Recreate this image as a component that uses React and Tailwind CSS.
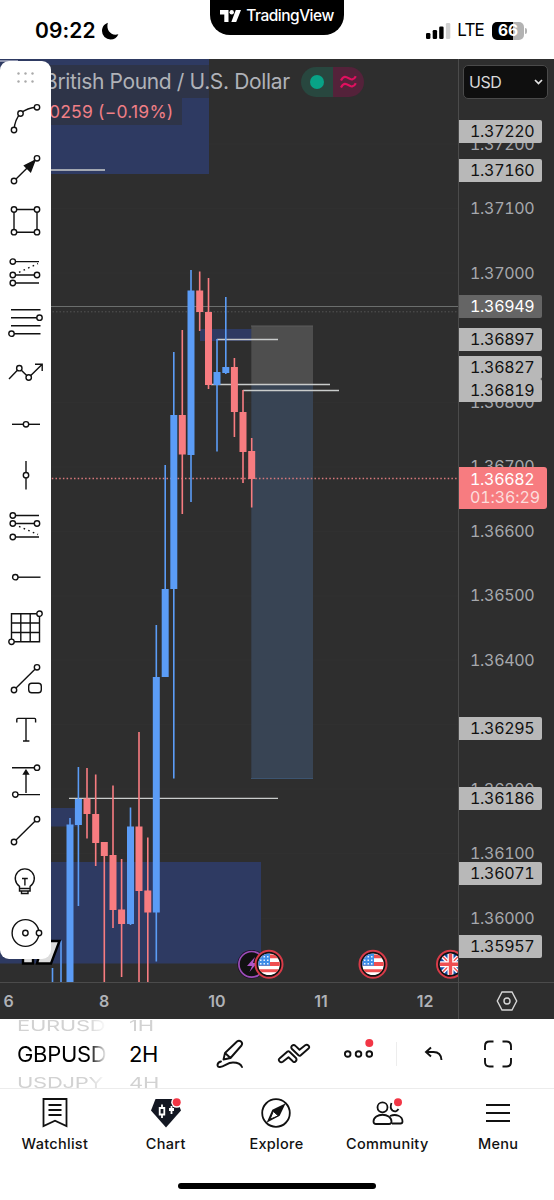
import React from "react";

const BLUE = "#5b9cf6";
const RED = "#f77c80";

// [x, wickTop, bodyTop, bodyBottom, wickBottom, color]
const candles = [
  [52.5, 968, 982, 982, 982, BLUE],
  [61, 940.5, 982, 982, 982, BLUE],
  [70, 818, 824.5, 982, 982, BLUE],
  [78.4, 767, 799, 825, 906, BLUE],
  [87, 768, 798.5, 814, 838.5, RED],
  [95.7, 774.5, 814, 843, 866, RED],
  [104.3, 842, 842, 856, 982, RED],
  [113, 785.5, 855, 910, 928, RED],
  [121.6, 859, 909.5, 924, 977, RED],
  [130.5, 807.5, 826.5, 924, 925, BLUE],
  [139, 732, 826.5, 891, 982, RED],
  [147.8, 837.5, 890.5, 912.5, 982, RED],
  [156.3, 625, 677, 912.5, 961.5, BLUE],
  [165.2, 465, 589, 677, 677, BLUE],
  [173.8, 352, 415, 589, 778.5, BLUE],
  [182.3, 330, 415, 454.5, 514, RED],
  [191, 270, 290.5, 455, 502, BLUE],
  [199.7, 271.5, 290.5, 312, 331, RED],
  [208.5, 278, 312, 385, 389, RED],
  [217, 339, 372, 385, 451.5, BLUE],
  [225.8, 297, 367, 373, 374, BLUE],
  [234.4, 358, 367, 412, 437, RED],
  [243, 390, 412, 452, 483, RED],
  [251.7, 438, 451, 479, 507.5, RED],
];

const ticks = [
  ["1.37200", 143.5],
  ["1.37100", 208],
  ["1.37000", 272.5],
  ["1.36800", 401.5],
  ["1.36700", 466],
  ["1.36600", 530.5],
  ["1.36500", 595],
  ["1.36400", 659.5],
  ["1.36200", 788.5],
  ["1.36100", 853],
  ["1.36000", 917.5],
];

const levels = [
  ["1.37220", 131],
  ["1.37160", 170],
  ["1.36897", 339.5],
  ["1.36827", 367.5],
  ["1.36819", 390.5],
  ["1.36295", 728.5],
  ["1.36186", 798.5],
  ["1.36071", 873],
  ["1.35957", 946],
];

function Dot({ x, y }) {
  return <circle cx={x} cy={y} r="2.7" fill="#fff" />;
}

const tools = [
  <><path d="M7 29C7.6 22 9.5 16.5 13.5 12.5C18 8.6 23 6.6 30 6.3" /><Dot x={7} y={29} /><Dot x={13.5} y={12.5} /><Dot x={30} y={6.3} /></>,
  <><path d="M7 29L30 6.3" /><path d="M28 8.3L17.5 13.6L23.6 19.8Z" fill="#111" /><Dot x={7} y={29} /><Dot x={30} y={6.3} /></>,
  <><path d="M7 6.5H30V29.2H7Z" /><Dot x={7} y={6.5} /><Dot x={30} y={6.5} /><Dot x={7} y={29.2} /><Dot x={30} y={29.2} /></>,
  <><path d="M6 7.6H32M6 21H30M6 29H32" /><path d="M12 18.3L31 9.6" strokeDasharray="1.6 3.4" /><Dot x={5.8} y={7.6} /><Dot x={5.8} y={21} /><Dot x={30} y={21} /><Dot x={5.8} y={29} /></>,
  <><path d="M4 4.7H33.5M4 12.7H32M4 20.7H33.5M5 28.7H33.5" /><Dot x={32.5} y={12.7} /><Dot x={4.5} y={28.7} /></>,
  <><path d="M2 24L12.3 13.2L21.7 22.5L35 9.5M28 9.2H35.2V16" /><Dot x={12.3} y={13.2} /><Dot x={21.7} y={22.5} /></>,
  <><path d="M5 18.3H33" /><Dot x={19} y={18.3} /></>,
  <><path d="M19 4V32.4" /><Dot x={19} y={18.2} /></>,
  <><path d="M6 7.5H32M6 15.5H30M6 29H32" /><path d="M12 18.4L31 26.5" strokeDasharray="1.6 3.4" /><Dot x={5.8} y={7.5} /><Dot x={5.8} y={15.5} /><Dot x={30} y={15.5} /><Dot x={5.8} y={29} /></>,
  <><path d="M8 18.2H33.5" /><Dot x={8.3} y={18.2} /></>,
  <><path d="M4.5 3.7H32.5V31.8H4.5ZM13.8 3.7V31.8M23.2 3.7V31.8M4.5 13H32.5M4.5 22.5H32.5" /><Dot x={32.5} y={3.7} /><Dot x={4.5} y={31.8} /></>,
  <><path d="M7 29L30 6.3" /><rect x="21.7" y="22.3" width="12.6" height="9.4" rx="3" /><Dot x={7} y={29} /><Dot x={30} y={6.3} /></>,
  <path d="M9.8 10.4V7.4Q9.8 6.4 10.8 6.4H27.6Q28.6 6.4 28.6 7.4V10.4M19 6.4V29M16 29H22.4" />,
  <><path d="M5 4.7H30M8 31.6H33M19 30V8" /><path d="M19 7.2L16.6 11H21.4Z" fill="#111" /><Dot x={30} y={4.7} /><Dot x={8.3} y={31.6} /></>,
  <><path d="M7 29L30 6.2" /><Dot x={7} y={29} /><Dot x={30} y={6.2} /></>,
  <><path d="M12.5 22.3A9.5 9.5 0 1 1 23.1 22.3V27H12.5ZM14.5 27V29.5H21V27M12.5 24.5H23M15 14.5H20.8M17.9 14.5V21.5" /></>,
  <><circle cx="18.5" cy="18" r="13.4" /><Dot x={18.4} y={18} /><Dot x={32} y={18} /></>,
];

function UsFlag({ x }) {
  return (
    <g transform={`translate(${x} 964.3)`}>
      <circle r="13.5" fill="#111" stroke="#d83b48" strokeWidth="2" />
      <g clipPath="url(#flag)">
        <path d="M-11-11H11V11H-11Z" fill="#fff" />
        <path d="M-11-9.8H11V-6H-11ZM-11-2.3H11V1.6H-11ZM-11 5H11V8H-11Z" fill="#ef4f51" />
        <path d="M-11-11H1V1.5H-11Z" fill="#3f8fe8" />
        <path d="M-9-7.5H0M-9-4H0M-9-.6H0" stroke="#e8f3ff" strokeWidth="1.5" strokeDasharray="1.5 2" />
      </g>
    </g>
  );
}

function UkFlag({ x }) {
  return (
    <g transform={`translate(${x} 964.3)`}>
      <circle r="13.5" fill="#111" stroke="#d83b48" strokeWidth="2" />
      <g clipPath="url(#flag)">
        <path d="M-11-11H11V11H-11Z" fill="#184fa8" />
        <path d="M-11-11L11 11M11-11L-11 11" stroke="#fff" strokeWidth="4" />
        <path d="M-11-11L11 11M11-11L-11 11" stroke="#ef4f51" strokeWidth="1.5" />
        <path d="M0-11V11M-11 0H11" stroke="#fff" strokeWidth="6" />
        <path d="M0-11V11M-11 0H11" stroke="#ef4f51" strokeWidth="3.4" />
      </g>
    </g>
  );
}

function StatusBar() {
  return (
    <header className="relative flex h-[59px] shrink-0 justify-between bg-white pl-[35px] pr-[27px] text-black">
      <div className="flex h-[62px] items-center gap-[6px]">
        <span className="text-[21px] font-semibold tracking-[0.1px]">09:22</span>
        <svg width="17" height="18" viewBox="0 0 17 18">
          <path d="M5.8 .8C1.8 2.3 0 5.5 0 9A8.5 8.5 0 0 0 8.5 17.5C12.2 17.5 15 15.5 16.4 12.2C9.5 14.5 3.8 8.5 5.8 .8Z" />
        </svg>
      </div>
      <div className="absolute left-[210px] top-0 flex h-[35px] w-[134px] justify-center gap-[5px] rounded-b-[20px] bg-black pt-[5px] text-white">
        <svg width="21" height="12" viewBox="0 0 21 12" className="mt-[5px]" fill="#fff">
          <path d="M0 0H8.5V12H4.3V4.4H0Z" />
          <circle cx="11.7" cy="2.2" r="2.2" />
          <path d="M15.8 0H21L16.2 12H11.3Z" />
        </svg>
        <span className="text-[15.5px] font-medium leading-[22px] tracking-[-0.5px]">TradingView</span>
      </div>
      <div className="flex h-[62px] items-center">
        <svg width="25" height="16" viewBox="0 0 25 16">
          <rect x="0" y="10" width="4.4" height="6" rx="1.3" />
          <rect x="6.7" y="7" width="4.4" height="9" rx="1.3" />
          <rect x="13.2" y="3.5" width="4.4" height="12.5" rx="1.3" />
          <rect x="19.9" y="0" width="4.4" height="16" rx="1.3" fill="#d0d0d0" />
        </svg>
        <span className="ml-[6px] text-[17px] tracking-[-0.8px]">LTE</span>
        <div className="ml-[8px] flex h-[18px] w-[32px] items-center justify-center rounded-[5px] bg-[linear-gradient(90deg,#000_66%,#b3b3b3_66%)] text-[15.5px] font-bold leading-none text-white">66</div>
        <div className="ml-[1px] h-[6px] w-[2px] rounded-r bg-[#b3b3b3]" />
      </div>
    </header>
  );
}

function Plot() {
  return (
    <svg className="block h-[923px] w-[458px]" viewBox="0 59 458 923">
      <defs>
        <clipPath id="flag"><circle r="10.8" /></clipPath>
      </defs>
      <path d="M0 144H458M0 208.5H458M0 273H458M0 402.5H458M0 467H458M0 531.5H458M0 596H458M0 660H458M0 724.5H458M0 789H458M0 853.5H458M0 918.5H458" stroke="#303030" />
      <g fill="#2e3a62">
        <rect x="0" y="59" width="209" height="115" />
        <rect x="200" y="329" width="61" height="12" />
        <rect x="0" y="808" width="78" height="18.5" />
        <rect x="0" y="862" width="261" height="101.5" />
      </g>
      <path d="M0 61H18" stroke="#8d93ad" strokeWidth="2" />
      <rect x="251.3" y="326" width="61.7" height="59" fill="#4e4e4e" />
      <rect x="251.3" y="385" width="61.7" height="394" fill="#384454" />
      <path d="M251 326H313" stroke="#5c5c5c" />
      <path d="M251 778.5H313" stroke="#3c5470" />
      <path d="M0 306.5H458" stroke="#6b6e6d" strokeWidth="1.2" />
      <path d="M0 311.8H458" stroke="#555" strokeDasharray="1.5 2" />
      <path d="M0 478.5H458" stroke="#d9797c" strokeWidth="1.3" strokeDasharray="1.5 2.2" />
      <path d="M0 170H105M217 339.5H278M211 384.5H330M243 390.5H339M69 798.4H278" stroke="#c9cccb" strokeWidth="1.4" />
      {candles.map(([x, top, open, close, bottom, color]) => (
        <g key={x} fill={color}>
          <rect x={x - 0.8} y={top} width="1.6" height={bottom - top} />
          <rect x={x - 3.5} y={open} width="7" height={close - open} />
        </g>
      ))}
      <path d="M12 941H33V963.5H23V950H12ZM43 941H59.5L51 963.5H37Z" fill="#dcdcdc" stroke="#000" strokeWidth="2.4" />
      <circle cx="251.7" cy="964.3" r="14.3" fill="#1c0f22" />
      <circle cx="251.7" cy="964.3" r="12.8" fill="#111" stroke="#9c4db8" strokeWidth="1.7" />
      <path d="M255 957L247 966H252L249.5 972L257 963H253Z" fill="#ad56c8" />
      <UsFlag x={269} />
      <UsFlag x={373} />
      <UkFlag x={450.5} />
    </svg>
  );
}

function Legend() {
  return (
    <div className="absolute left-[44px] top-[6px] flex flex-col items-start whitespace-nowrap">
      <div className="flex h-[33px] items-center gap-[11px] bg-[#2e2e2e]/50">
        <span className="w-[246px] pt-px text-[21px] tracking-[-0.36px] text-[#b0b2b8]">British Pound / U.S. Dollar</span>
        <span className="flex h-[30px] w-[63px] overflow-hidden rounded-full">
          <span className="flex w-1/2 items-center justify-center bg-[#28473f]">
            <span className="size-[14px] rounded-full bg-[#08a387]" />
          </span>
          <span className="flex w-1/2 items-center justify-center bg-[#54223a]">
            <svg width="17" height="14" viewBox="0 0 17 14" fill="none" stroke="#e0105f" strokeWidth="2.2">
              <path d="M1 5.5C3.5.5 6 1.5 8.5 3.2S13.5 5.5 15.8 1.2M1 12.5C3.5 7.5 6 8.5 8.5 10.2S13.5 12.5 15.8 8.2" />
            </svg>
          </span>
        </span>
      </div>
      <div className="flex h-[27px] w-[138px] items-center bg-[#2e2e2e]/50 pl-[5px] pt-[2px] text-[17.5px] tracking-[0.2px] text-[#f07f86]">0259 (−0.19%)</div>
    </div>
  );
}

function ToolRail() {
  return (
    <div className="absolute left-0 top-[2px] flex h-[898px] w-[51px] flex-col rounded-[9px] bg-white">
      <div className="flex h-[32.5px] shrink-0 justify-center pt-[11px]">
        <svg width="17" height="11" viewBox="0 0 17 11" fill="#aaa">
          <circle cx="1.5" cy="1.5" r="1.2" /><circle cx="8.5" cy="1.5" r="1.2" /><circle cx="15.5" cy="1.5" r="1.2" />
          <circle cx="1.5" cy="9.5" r="1.2" /><circle cx="8.5" cy="9.5" r="1.2" /><circle cx="15.5" cy="9.5" r="1.2" />
        </svg>
      </div>
      {tools.map((icon, i) => (
        <button key={i} className="flex h-[50.9px] shrink-0 items-center pl-[7px]">
          <svg width="36" height="36" viewBox="0 0 36 36" fill="none" stroke="#111" strokeWidth="1.4">{icon}</svg>
        </button>
      ))}
    </div>
  );
}

function PriceScale() {
  return (
    <div className="relative h-[923px] w-[96px] overflow-hidden border-l border-[#4b4b4b] text-[16px] tabular-nums tracking-[-0.3px]">
      <button className="ml-[4px] mt-[6px] flex h-[34px] w-[85px] items-center justify-between rounded-[5px] border border-[#4a4a4a] bg-[#0f0f0f] pl-[5px] pr-[4px] tracking-[-0.5px] text-[#d9d9d9]">
        USD
        <svg width="9" height="6" viewBox="0 0 9 6" fill="none" stroke="#e5e5e5" strokeWidth="1.7"><path d="M1 1L4.5 4.5L8 1" /></svg>
      </button>
      {ticks.map(([label, y]) => (
        <span key={label} className="absolute left-[11px] leading-[22px] text-[#a6a8ad]" style={{ top: y - 70 }}>{label}</span>
      ))}
      {levels.map(([label, y]) => (
        <span key={label} className="absolute left-0 h-[23px] w-[83px] rounded-r-[2px] bg-[#b8b8b8] pl-[11px] leading-[23px] text-[#111]" style={{ top: y - 70.5 }}>{label}</span>
      ))}
      <span className="absolute left-0 top-[236px] h-[23px] w-[83px] rounded-r-[2px] bg-[#656565] pl-[11px] leading-[23px] text-white">1.36949</span>
      <div className="absolute left-0 top-[408px] flex h-[42px] w-[88px] flex-col rounded-r-[3px] bg-[#f77c80] pl-[11px] pt-[3px] leading-[18px] text-white">
        <span>1.36682</span>
        <span className="tracking-[-0.1px] text-[#fcdcdc]">01:36:29</span>
      </div>
    </div>
  );
}

function TimeScale() {
  return (
    <div className="flex h-[37px] border-t border-[#4b4b4b] text-[16px] font-semibold text-[#b0b2b7]">
      <div className="flex w-[458px] items-center">
        <span className="w-[17px] text-center">6</span>
        <span className="ml-[57px] w-[60px] text-center">8</span>
        <span className="ml-[53px] w-[60px] text-center">10</span>
        <span className="ml-[44px] w-[60px] text-center">11</span>
        <span className="ml-[44px] w-[60px] text-center">12</span>
      </div>
      <div className="flex w-[96px] items-center justify-center border-l border-[#4b4b4b]">
        <svg width="22" height="20" viewBox="0 0 22 20" fill="none" stroke="#d6d6d6" strokeWidth="1.4">
          <path d="M6 1H16L20.7 10L16 19H6L1.3 10Z" /><circle cx="11" cy="10" r="3" />
        </svg>
      </div>
    </div>
  );
}

function QuickBar() {
  return (
    <div className="flex h-[70px] items-center border-b border-[#ececec] bg-white text-[22px] text-black">
      <div className="ml-[17px] h-[69px] w-[90px] overflow-hidden whitespace-nowrap tracking-[-0.3px] [mask-image:linear-gradient(90deg,#000_80%,transparent)]">
        <div className="h-[21px] origin-top scale-y-65 leading-[20px] text-[#d2d2d2]">EURUSD</div>
        <div className="h-[29px] leading-[29px]">GBPUSD</div>
        <div className="h-[24px] origin-top scale-y-65 pt-[8px] leading-[27px] text-[#d2d2d2]">USDJPY</div>
      </div>
      <div className="ml-[22px] h-[69px] w-[36px] overflow-hidden tracking-[-0.3px]">
        <div className="h-[21px] origin-top scale-y-65 leading-[20px] text-[#d2d2d2]">1H</div>
        <div className="h-[29px] leading-[29px]">2H</div>
        <div className="h-[24px] origin-top scale-y-65 pt-[8px] leading-[27px] text-[#d2d2d2]">4H</div>
      </div>
      <svg className="ml-[50px]" width="32" height="32" viewBox="0 0 32 32" fill="none" stroke="#111" strokeWidth="1.9" strokeLinejoin="round" strokeLinecap="round">
        <path d="M10 15L22 3.5Q24 1.8 26 3.5T26.5 7.5L15.5 20L8.5 21.5ZM10 15L15.5 20" />
        <path d="M6 23.5C1.5 24.5 1.5 29.5 5 29C10 28.5 12 24.5 18 24.5C23 24.5 26 26.5 27 29" />
      </svg>
      <svg className="ml-[30px]" width="34" height="22" viewBox="0 0 34 22" fill="none" stroke="#111" strokeWidth="1.9" strokeLinejoin="round">
        <path d="M2.5 15.5L10.5 8.5Q11.5 7.8 12.5 8.7L19 15Q20.3 17 18.5 18.5T15.5 18L11.5 14.3L5.8 18.8Q4 20 2.5 18.3T2.5 15.5Z" />
        <path d="M15 2.7Q16.8 1.2 18.5 2.9L22.5 6.7L28.2 2.2Q30 1 31.5 2.7T31.5 5.5L23.5 12.5Q22.5 13.2 21.5 12.3L15 6Q13.5 4.3 15 2.7Z" />
      </svg>
      <svg className="ml-[32px]" width="32" height="34" viewBox="0 0 32 34" fill="none" stroke="#111" strokeWidth="1.9">
        <circle cx="4.7" cy="17" r="2.8" /><circle cx="15.5" cy="17" r="2.8" /><circle cx="26.3" cy="17" r="2.8" />
        <circle cx="26.3" cy="6" r="4" fill="#f23645" stroke="none" />
      </svg>
      <div className="ml-[21px] h-[24px] w-px bg-[#ededed]" />
      <svg className="ml-[27px]" width="20" height="16" viewBox="0 0 20 16" fill="none" stroke="#111" strokeWidth="1.9">
        <path d="M7 1.5L2 6L7 10.5M2 6H9.5Q17 6 17.5 14" />
      </svg>
      <svg className="ml-[40px]" width="28" height="28" viewBox="0 0 28 28" fill="none" stroke="#111" strokeWidth="1.9">
        <path d="M1 10V6Q1 1.5 5.5 1.5H9.5M18.5 1.5H22.5Q27 1.5 27 6V10M27 18V22Q27 26.5 22.5 26.5H18.5M9.5 26.5H5.5Q1 26.5 1 22V18" />
      </svg>
    </div>
  );
}

const tabs = [
  ["Watchlist", <path d="M4.5 2H27.5V29L16 23.8L4.5 29ZM9.5 8H22.5M9.5 13H22.5M9.5 18H22.5" />],
  ["Chart", <><path d="M5.5 2H26.5L31 13.5L16 30.5L1 13.5Z" fill="#131722" stroke="none" /><path d="M12 7.5V11M12 17.5V21M9.7 11H14.3V17.5H9.7ZM21.5 9V17" stroke="#fff" /><path d="M19 11H24V14H19Z" fill="#fff" stroke="none" /><circle cx="26.7" cy="5.3" r="5.5" fill="#fff" stroke="none" /><circle cx="26.7" cy="5.3" r="4" fill="#f23645" stroke="none" /></>],
  ["Explore", <><circle cx="16" cy="16" r="13.8" /><path d="M23.8 8.2L19 18L8.5 23.8L13 13.5Z" fill="#111" /><path d="M13.3 14.3L18.2 18.8L10 22.3Z" fill="#fff" strokeWidth="1" /></>],
  ["Community", <><circle cx="11.5" cy="10.3" r="5" /><path d="M2.5 24.5C2.5 15.5 20.5 15.5 20.5 24.5Q20.5 27 18 27H5Q2.5 27 2.5 24.5ZM20.5 6Q18.5 11 21.5 13.5Q25 16 27.5 12M19 19C25 16.5 31.5 19 31.5 24.5Q31.5 26.5 29.5 26.5H21" /><circle cx="27" cy="5.3" r="4" fill="#f23645" stroke="none" /></>],
  ["Menu", <path d="M4 8H28M4 16H28M4 24H28" />],
];

function TabBar() {
  return (
    <nav className="flex h-[111px] flex-col items-center bg-white text-[#111]">
      <div className="-ml-px flex w-full">
        {tabs.map(([name, icon]) => (
          <button key={name} className="flex w-[110.8px] flex-col items-center pt-[8px]">
            <svg width="32" height="32" viewBox="0 0 32 32" fill="none" stroke="#111" strokeWidth="1.8" className="overflow-visible">{icon}</svg>
            <span className="mt-[5px] text-[14.5px] font-medium leading-5 tracking-[0.3px]">{name}</span>
          </button>
        ))}
      </div>
      <div className="mt-[28.5px] h-[6px] w-[198px] rounded-full bg-black" />
    </nav>
  );
}

export default function App() {
  return (
    <div className="flex h-[1200px] w-[554px] flex-col overflow-hidden bg-white font-['Inter',sans-serif]">
      <StatusBar />
      <main className="relative h-[960px] shrink-0 bg-[#2e2e2e]">
        <div className="flex">
          <Plot />
          <PriceScale />
        </div>
        <TimeScale />
        <Legend />
        <ToolRail />
      </main>
      <QuickBar />
      <TabBar />
    </div>
  );
}
